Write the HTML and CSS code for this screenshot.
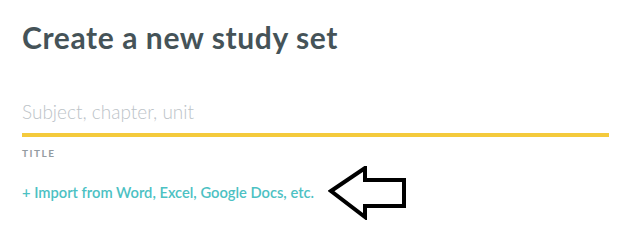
FILE: index.html
```html
<!DOCTYPE html>
<html>
<head>
<meta charset="utf-8">
<link rel="stylesheet" href="styles.css">
</head>
<body>
<main class="page">
  <h1 class="heading">Create a new study set</h1>
  <div class="field">
    <div class="input">Subject, chapter, unit</div>
    <div class="label">TITLE</div>
  </div>
  <div class="import-row">
    <a class="import" href="#">+ Import from Word, Excel, Google Docs, etc.</a>
    <svg class="arrow" width="80" height="54" viewBox="0 0 80 54">
      <path d="M3 25 L37 2 L37 14 L76 14 L76 40 L37 40 L37 51 Z" fill="#fff" stroke="#000" stroke-width="4" stroke-linejoin="miter"/>
    </svg>
  </div>
</main>
</body>
</html>
```
FILE: styles.css
```css
html, body { margin: 0; padding: 0; background: #fff; }
.page {
  width: 620px;
  height: 242px;
  padding: 18px 11px 0 22px;
  box-sizing: border-box;
  font-family: Lato, "Noto Sans", sans-serif;
}
.heading {
  margin: 0;
  font-size: 30px;
  font-weight: 700;
  color: #455358;
  line-height: 38px;
  letter-spacing: 0.6px;
}
.field { margin-top: 44px; }
.input {
  font-size: 19px;
  font-weight: 300;
  color: #bcc3c8;
  line-height: 24px;
  padding-bottom: 9px;
  border-bottom: 4px solid #f4ca3c;
}
.label {
  margin-top: 10px;
  font-size: 10px;
  font-weight: 700;
  letter-spacing: 1.5px;
  color: #939ba1;
  line-height: 12px;
}
.import-row {
  display: flex;
  align-items: center;
  margin-top: 7px;
  gap: 14px;
}
.import {
  font-size: 14.7px;
  font-weight: 600;
  color: #4cc1c3;
  text-decoration: none;
  line-height: 18px;
  padding-bottom: 2px;
}
.arrow { display: block; }
```
